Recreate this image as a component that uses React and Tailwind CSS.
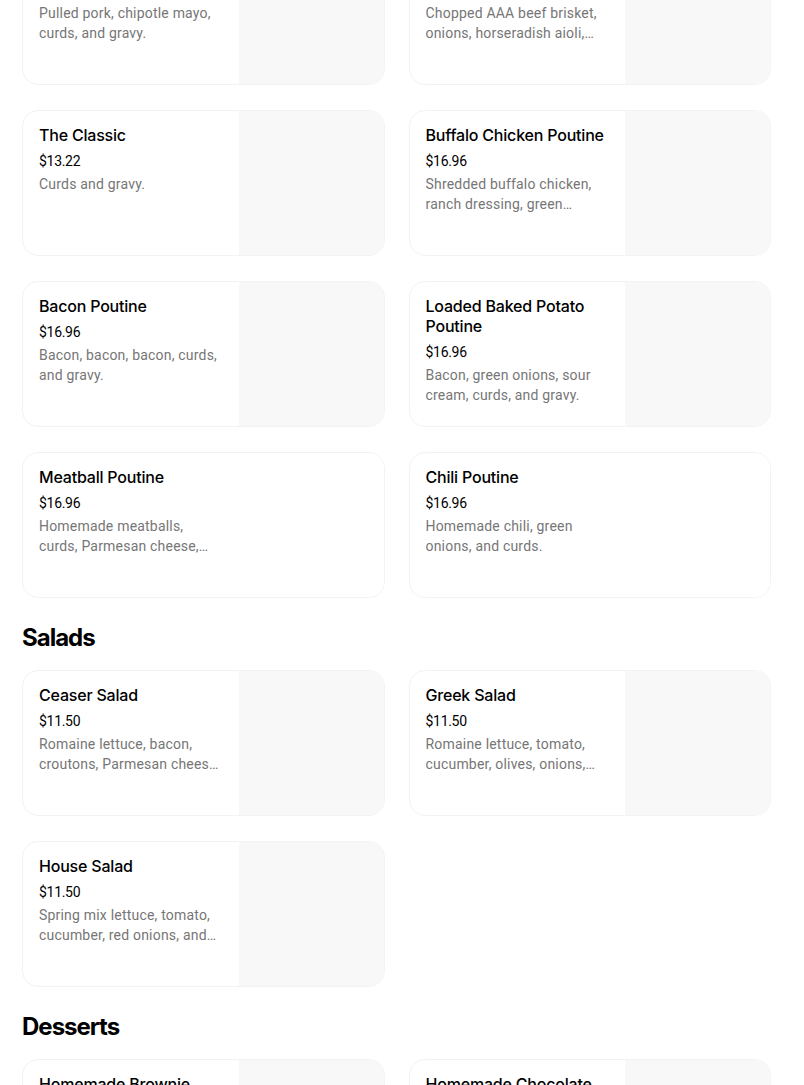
const sections = [
    {
        title: null,
        items: [
            { name: 'Pulled Pork Poutine', price: '$16.96', desc: 'Pulled pork, chipotle mayo, curds, and gravy.' },
            { name: 'Brisket Poutine', price: '$16.96', desc: 'Chopped AAA beef brisket, onions, horseradish aioli, curds, and gravy.' },
            { name: 'The Classic', price: '$13.22', desc: 'Curds and gravy.' },
            { name: 'Buffalo Chicken Poutine', price: '$16.96', desc: 'Shredded buffalo chicken, ranch dressing, green onions, curds, and gravy.' },
            { name: 'Bacon Poutine', price: '$16.96', desc: 'Bacon, bacon, bacon, curds, and gravy.' },
            { name: 'Loaded Baked Potato Poutine', price: '$16.96', desc: 'Bacon, green onions, sour cream, curds, and gravy.' },
            { name: 'Meatball Poutine', price: '$16.96', desc: 'Homemade meatballs, curds, Parmesan cheese, and marinara sauce.', noImage: true },
            { name: 'Chili Poutine', price: '$16.96', desc: 'Homemade chili, green onions, and curds.', noImage: true },
        ],
    },
    {
        title: 'Salads',
        items: [
            { name: 'Ceaser Salad', price: '$11.50', desc: 'Romaine lettuce, bacon, croutons, Parmesan cheese, and Caesar dressing.' },
            { name: 'Greek Salad', price: '$11.50', desc: 'Romaine lettuce, tomato, cucumber, olives, onions, feta cheese, and Greek dressing.' },
            { name: 'House Salad', price: '$11.50', desc: 'Spring mix lettuce, tomato, cucumber, red onions, and balsamic dressing.' },
        ],
    },
    {
        title: 'Desserts',
        items: [
            { name: 'Homemade Brownie', price: '$5.50', desc: 'Rich chocolate brownie.' },
            { name: 'Homemade Chocolate Chip Cookie', price: '$3.50', desc: 'Freshly baked cookie.' },
        ],
    },
];

const MenuCard = ({ item }) => {
    return (
        <div className="flex h-[146px] rounded-2xl border border-[#f3f3f3] bg-white overflow-hidden">
            <div className="flex-1 min-w-0 pt-[14px] pl-4 pr-4 flex flex-col">
                <div className="mb-[6px] text-[16px] leading-5 font-medium text-black tracking-[-0.2px]">{item.name}</div>
                <div className="mb-[3px] text-[14px] leading-5 text-black font-['Roboto',sans-serif] tracking-[-0.3px]">{item.price}</div>
                <div className="text-[14px] leading-5 text-[#767676] line-clamp-2 font-['Roboto',sans-serif] tracking-[0.2px]">{item.desc}</div>
            </div>
            <div className={`w-[145px] shrink-0 h-full ${item.noImage ? 'bg-white' : 'bg-[#f8f8f8]'}`} />
        </div>
    );
};

export default function App() {
    return (
        <div className="w-[804px] h-[1085px] overflow-hidden bg-white" style={{ fontFamily: 'Inter, "Noto Sans", sans-serif' }}>
            <div className="-mt-[61px] pl-[22px] w-[771px]">
                {sections.map((section, i) => (
                    <div key={i}>
                        {section.title && (
                            <h2 className="mt-6 mb-4 text-[24px] leading-8 font-bold text-black tracking-[-1px]">{section.title}</h2>
                        )}
                        <div className="grid grid-cols-2 gap-x-6 gap-y-[25px]">
                            {section.items.map((item) => (
                                <MenuCard key={item.name} item={item} />
                            ))}
                        </div>
                    </div>
                ))}
            </div>
        </div>
    );
}
